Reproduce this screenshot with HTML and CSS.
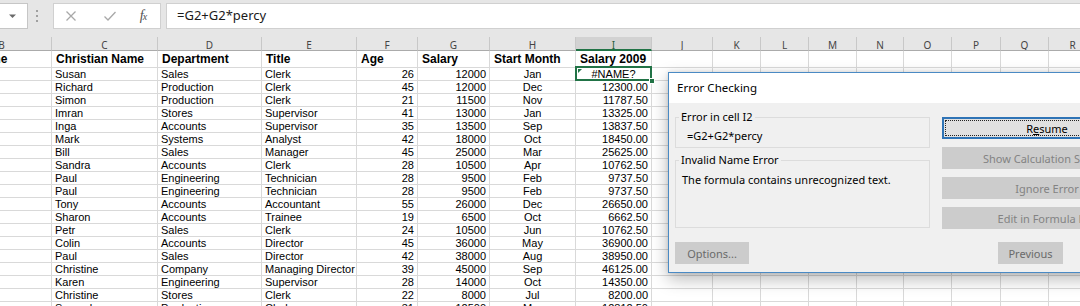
FILE: index.html
```html
<!DOCTYPE html>
<html>
<head>
<meta charset="utf-8">
<title>Error Checking</title>
<link rel="stylesheet" href="styles.css">
</head>
<body>
<div class="toolbar">
  <div class="namebox">
    <svg width="9" height="6" viewBox="0 0 9 6"><path d="M1 1.5 L4.5 5 L8 1.5 Z" fill="#6a6a6a"/></svg>
  </div>
  <div class="grip"><span></span><span></span><span></span></div>
  <div class="fxbox">
    <span class="slot s1"><svg width="12" height="12" viewBox="0 0 12 12"><path d="M1.5 1.5 L10.5 10.5 M10.5 1.5 L1.5 10.5" stroke="#a8a8a8" stroke-width="1.3" fill="none"/></svg></span>
    <span class="slot s2"><svg width="14" height="12" viewBox="0 0 14 12"><path d="M1.5 6.5 L5 10 L12.5 2" stroke="#a8a8a8" stroke-width="1.3" fill="none"/></svg></span>
    <span class="slot s3"><span class="fx">f<span class="fxx">x</span></span></span>
  </div>
  <div class="formula">=G2+G2*percy</div>
</div>

<div class="sheet">
  <div class="row colhead"><div>B</div><div>C</div><div>D</div><div>E</div><div>F</div><div>G</div><div>H</div><div class="sel">I</div><div>J</div><div>K</div><div>L</div><div>M</div><div>N</div><div>O</div><div>P</div><div>Q</div><div>R</div></div>
  <div class="row hdr"><div>Surname</div><div>Christian Name</div><div>Department</div><div>Title</div><div>Age</div><div>Salary</div><div>Start Month</div><div>Salary 2009</div><div></div><div></div><div></div><div></div><div></div><div></div><div></div><div></div><div></div></div>
  <div class="row"><div></div><div>Susan</div><div>Sales</div><div>Clerk</div><div class="n">26</div><div class="n">12000</div><div class="m">Jan</div><div class="m active"><span class="tri"></span>#NAME?<span class="handle"></span></div><div></div><div></div><div></div><div></div><div></div><div></div><div></div><div></div><div></div></div>
  <div class="row"><div></div><div>Richard</div><div>Production</div><div>Clerk</div><div class="n">45</div><div class="n">12000</div><div class="m">Dec</div><div class="n">12300.00</div><div></div><div></div><div></div><div></div><div></div><div></div><div></div><div></div><div></div></div>
  <div class="row"><div></div><div>Simon</div><div>Production</div><div>Clerk</div><div class="n">21</div><div class="n">11500</div><div class="m">Nov</div><div class="n">11787.50</div><div></div><div></div><div></div><div></div><div></div><div></div><div></div><div></div><div></div></div>
  <div class="row"><div></div><div>Imran</div><div>Stores</div><div>Supervisor</div><div class="n">41</div><div class="n">13000</div><div class="m">Jan</div><div class="n">13325.00</div><div></div><div></div><div></div><div></div><div></div><div></div><div></div><div></div><div></div></div>
  <div class="row"><div></div><div>Inga</div><div>Accounts</div><div>Supervisor</div><div class="n">35</div><div class="n">13500</div><div class="m">Sep</div><div class="n">13837.50</div><div></div><div></div><div></div><div></div><div></div><div></div><div></div><div></div><div></div></div>
  <div class="row"><div></div><div>Mark</div><div>Systems</div><div>Analyst</div><div class="n">42</div><div class="n">18000</div><div class="m">Oct</div><div class="n">18450.00</div><div></div><div></div><div></div><div></div><div></div><div></div><div></div><div></div><div></div></div>
  <div class="row"><div></div><div>Bill</div><div>Sales</div><div>Manager</div><div class="n">45</div><div class="n">25000</div><div class="m">Mar</div><div class="n">25625.00</div><div></div><div></div><div></div><div></div><div></div><div></div><div></div><div></div><div></div></div>
  <div class="row"><div></div><div>Sandra</div><div>Accounts</div><div>Clerk</div><div class="n">28</div><div class="n">10500</div><div class="m">Apr</div><div class="n">10762.50</div><div></div><div></div><div></div><div></div><div></div><div></div><div></div><div></div><div></div></div>
  <div class="row"><div></div><div>Paul</div><div>Engineering</div><div>Technician</div><div class="n">28</div><div class="n">9500</div><div class="m">Feb</div><div class="n">9737.50</div><div></div><div></div><div></div><div></div><div></div><div></div><div></div><div></div><div></div></div>
  <div class="row"><div></div><div>Paul</div><div>Engineering</div><div>Technician</div><div class="n">28</div><div class="n">9500</div><div class="m">Feb</div><div class="n">9737.50</div><div></div><div></div><div></div><div></div><div></div><div></div><div></div><div></div><div></div></div>
  <div class="row"><div></div><div>Tony</div><div>Accounts</div><div>Accountant</div><div class="n">55</div><div class="n">26000</div><div class="m">Dec</div><div class="n">26650.00</div><div></div><div></div><div></div><div></div><div></div><div></div><div></div><div></div><div></div></div>
  <div class="row"><div></div><div>Sharon</div><div>Accounts</div><div>Trainee</div><div class="n">19</div><div class="n">6500</div><div class="m">Oct</div><div class="n">6662.50</div><div></div><div></div><div></div><div></div><div></div><div></div><div></div><div></div><div></div></div>
  <div class="row"><div></div><div>Petr</div><div>Sales</div><div>Clerk</div><div class="n">24</div><div class="n">10500</div><div class="m">Jun</div><div class="n">10762.50</div><div></div><div></div><div></div><div></div><div></div><div></div><div></div><div></div><div></div></div>
  <div class="row"><div></div><div>Colin</div><div>Accounts</div><div>Director</div><div class="n">45</div><div class="n">36000</div><div class="m">May</div><div class="n">36900.00</div><div></div><div></div><div></div><div></div><div></div><div></div><div></div><div></div><div></div></div>
  <div class="row"><div></div><div>Paul</div><div>Sales</div><div>Director</div><div class="n">42</div><div class="n">38000</div><div class="m">Aug</div><div class="n">38950.00</div><div></div><div></div><div></div><div></div><div></div><div></div><div></div><div></div><div></div></div>
  <div class="row"><div></div><div>Christine</div><div>Company</div><div>Managing Director</div><div class="n">39</div><div class="n">45000</div><div class="m">Sep</div><div class="n">46125.00</div><div></div><div></div><div></div><div></div><div></div><div></div><div></div><div></div><div></div></div>
  <div class="row"><div></div><div>Karen</div><div>Engineering</div><div>Supervisor</div><div class="n">28</div><div class="n">14000</div><div class="m">Oct</div><div class="n">14350.00</div><div></div><div></div><div></div><div></div><div></div><div></div><div></div><div></div><div></div></div>
  <div class="row"><div></div><div>Christine</div><div>Stores</div><div>Clerk</div><div class="n">22</div><div class="n">8000</div><div class="m">Jul</div><div class="n">8200.00</div><div></div><div></div><div></div><div></div><div></div><div></div><div></div><div></div><div></div></div>
  <div class="row"><div></div><div>Samuel</div><div>Production</div><div>Clerk</div><div class="n">31</div><div class="n">12500</div><div class="m">Mar</div><div class="n">12812.50</div><div></div><div></div><div></div><div></div><div></div><div></div><div></div><div></div><div></div></div>
</div>

<div class="dialog">
  <div class="titlebar">Error Checking</div>
  <div class="dbody">
    <div class="dmain">
      <div class="dleft">
        <fieldset class="grp g1">
          <legend>Error in cell I2</legend>
          <div class="ftext">=G2+G2*percy</div>
        </fieldset>
        <fieldset class="grp g2">
          <legend>Invalid Name Error</legend>
          <div class="etext">The formula contains unrecognized text.</div>
        </fieldset>
      </div>
      <div class="dright">
        <button class="btn focus"><span>R<u>e</u>sume</span></button>
        <button class="btn dis">Show Calculation Steps...</button>
        <button class="btn dis">Ignore Error</button>
        <button class="btn dis">Edit in Formula Bar</button>
      </div>
    </div>
    <div class="dfoot">
      <button class="btn dis opt">Options...</button>
      <div class="spacer"></div>
      <button class="btn dis nav">Previous</button>
      <button class="btn nav">Next</button>
    </div>
  </div>
</div>
</body>
</html>
```

FILE: styles.css
```css
* { box-sizing: border-box; }
html, body { margin: 0; padding: 0; }
body {
  width: 1080px;
  height: 306px;
  overflow: hidden;
  background: #ffffff;
  position: relative;
  font-family: "Liberation Sans", Arial, sans-serif;
  color: #000;
}

/* ---------- formula bar ---------- */
.toolbar {
  height: 37px;
  background: #e6e6e6;
  display: flex;
  align-items: flex-start;
  padding-top: 3px;
}
.namebox {
  width: 28px;
  height: 26px;
  background: #ffffff;
  border: 1px solid #c6c6c6;
  border-left: 0;
  display: flex;
  align-items: center;
  justify-content: center;
  padding-right: 2px;
}
.grip {
  width: 18px;
  height: 26px;
  display: flex;
  flex-direction: column;
  align-items: center;
  justify-content: center;
  gap: 3px;
}
.grip span {
  width: 2px;
  height: 2px;
  background: #a0a0a0;
}
.fxbox {
  margin-left: 7px;
  width: 108px;
  height: 26px;
  background: #ffffff;
  border: 1px solid #d0d0d0;
  display: flex;
  align-items: center;
}
.slot { display: flex; align-items: center; justify-content: center; height: 24px; }
.s1 { width: 33px; }
.s2 { width: 46px; }
.s3 { width: 20px; }
.fx {
  font-family: "Liberation Serif", "Times New Roman", serif;
  font-style: italic;
  font-size: 14px;
  color: #505050;
  letter-spacing: -1px;
}
.fxx { font-size: 10px; }
.formula {
  margin-left: 5px;
  flex: 1;
  height: 26px;
  background: #ffffff;
  border: 1px solid #d0d0d0;
  border-right: 0;
  padding-left: 10px;
  font-family: "Noto Sans", "Open Sans", sans-serif;
  font-size: 13px;
  line-height: 23px;
  color: #1a1a1a;
}

/* ---------- sheet ---------- */
.sheet { margin-left: -48px; }
.row {
  display: grid;
  grid-template-columns: 100px 106px 104px 95px 61px 72px 86px 76px 61px 48px 48px 48px 47px 48px 49px 48px 48px;
  height: 13px;
}
.row > div {
  border-right: 1px solid #d9d9d9;
  border-bottom: 1px solid #d9d9d9;
  padding: 0 3px;
  white-space: nowrap;
  overflow: hidden;
  font-size: 11px;
  line-height: 12px;
}
.row > .n { text-align: right; }
.row > .m { text-align: center; }

.colhead { height: 14px; background: #e6e6e6; }
.colhead > div {
  border-right: 1px solid #c8c8c8;
  border-bottom: 1px solid #ababab;
  text-align: center;
  font-family: "Noto Sans", "Open Sans", sans-serif;
  font-size: 10px;
  line-height: 16px;
  color: #444;
}
.colhead > .sel {
  background: #d2d2d2;
  border-bottom: 2px solid #217346;
  color: #1f5c3a;
}

.hdr { height: 17px; }
.hdr > div {
  font-weight: bold;
  font-size: 12px;
  line-height: 17px;
  padding-left: 4px;
}

.active {
  position: relative;
  overflow: visible !important;
}
.active::before {
  content: "";
  position: absolute;
  left: -1px;
  top: -2px;
  right: -1px;
  bottom: -1px;
  border: 2px solid #217346;
}
.handle {
  position: absolute;
  right: -4px;
  bottom: -4px;
  width: 6px;
  height: 6px;
  background: #217346;
  border: 1px solid #fff;
}
.tri {
  position: absolute;
  left: 2px;
  top: 1px;
  width: 0;
  height: 0;
  border-top: 4px solid #217346;
  border-right: 4px solid transparent;
}

/* ---------- dialog ---------- */
.dialog {
  position: absolute;
  left: 668px;
  top: 72px;
  width: 520px;
  height: 201px;
  background: #f0f0f0;
  border: 1px solid #4a8ac4;
  box-shadow: 0 6px 16px rgba(0, 0, 0, 0.28), 0 0 4px rgba(0, 0, 0, 0.12);
  font-family: "Noto Sans", "Open Sans", sans-serif;
  font-size: 11px;
  color: #000;
  z-index: 5;
}
.titlebar {
  height: 30px;
  background: #ffffff;
  padding-left: 8px;
  line-height: 30px;
  font-size: 11.5px;
}
.dbody { padding: 6px 0 0 6px; }
.dmain { display: flex; gap: 12px; }
.dleft { width: 255px; display: flex; flex-direction: column; gap: 4px; }
.grp {
  margin: 0;
  padding: 0;
  border: 1px solid #dcdcdc;
  min-width: 0;
}
.grp legend {
  margin-left: 3px;
  padding: 0 2px;
  line-height: 16px;
}
.g1 { height: 39px; }
.g2 { height: 76px; }
.ftext { padding: 4px 0 0 11px; line-height: 14px; }
.etext { padding: 5px 0 0 6px; line-height: 14px; }

.dright {
  width: 210px;
  padding-top: 8px;
  display: flex;
  flex-direction: column;
  gap: 8px;
}
.btn {
  height: 22px;
  border: 1px solid #cccccc;
  background: #cccccc;
  font-family: "Noto Sans", "Open Sans", sans-serif;
  font-size: 11px;
  color: #838383;
  padding: 0;
}
.btn.focus {
  position: relative;
  background: #e1e1e1;
  border: 2px solid #2f74b6;
  color: #000;
}
.btn.focus::after {
  content: "";
  position: absolute;
  left: 1px;
  top: 1px;
  right: 1px;
  bottom: 1px;
  border: 1px dotted #222;
}
.dfoot {
  display: flex;
  margin-top: 13px;
  width: 477px;
  gap: 24px;
}
.spacer { flex: 1; }
.opt { width: 74px; color: #6a6a6a; }
.nav { width: 65px; color: #6a6a6a; }
```
